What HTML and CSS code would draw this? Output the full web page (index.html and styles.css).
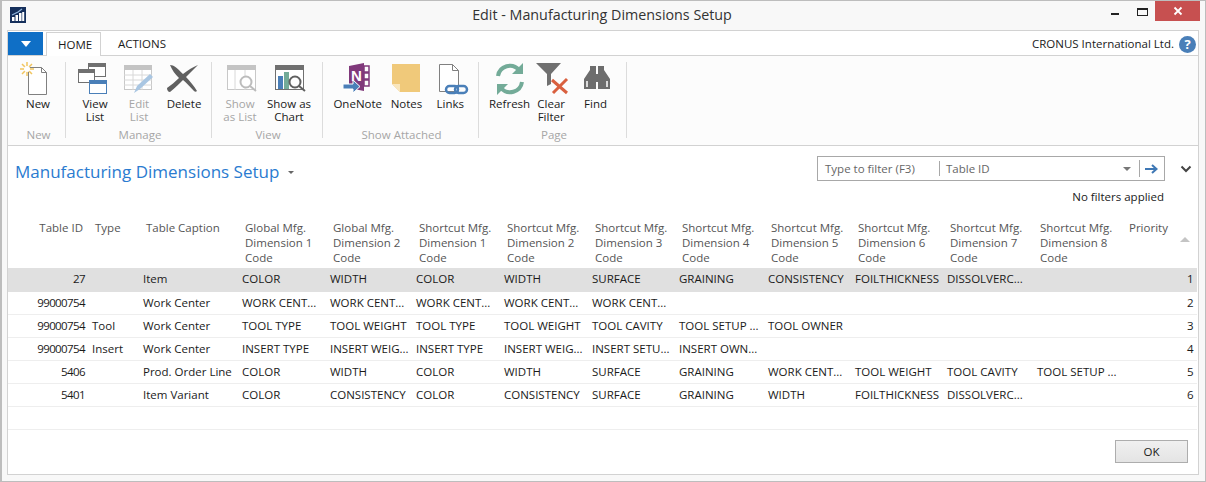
FILE: index.html
```html
<!DOCTYPE html>
<html>
    <head lang="en">
        <meta charset="UTF-8">
        <title>Edit - Manufacturing Dimensions Setup</title>
        <link rel="stylesheet" href="styles.css">
    </head>
    <body>
        <div id="window">
            <div id="titlebar">
                <svg class="logo" width="16" height="16" viewBox="0 0 16 16"><rect width="16" height="16" fill="#16305c"/><path d="M2 10h2.500v4H2zM5.500 8H8v6H5.500zM9 6h2.500v8H9zM12.200 5h2v9h-2z" fill="#fff"/><path d="M2 8l6-3 4-3" stroke="#8fb4dc" stroke-width="1.200" fill="none"/></svg>
                <div class="title">Edit - Manufacturing Dimensions Setup</div>
                <div class="winbtns">
                    <span class="min"></span>
                    <span class="max"></span>
                    <span class="close"><svg width="10" height="10" viewBox="0 0 10 10"><path d="M1.500 1.500l7 7M8.500 1.500l-7 7" stroke="#fff" stroke-width="1.800"/></svg></span>
                </div>
            </div>
            <div id="panel">
                <div id="tabs">
                    <div class="filebtn"><svg width="10" height="6" viewBox="0 0 10 6"><path d="M0 0h10L5 6z" fill="#fff"/></svg></div>
                    <div class="tab selected">HOME</div>
                    <div class="tab">ACTIONS</div>
                    <div class="company">CRONUS International Ltd.</div>
                    <div class="help">?</div>
                </div>
                <div id="ribbon">
                    <div class="group g-new">
                        <div class="btns">
                            <div class="rbtn w-new">
                                <svg class="ico" width="40" height="34" viewBox="0 0 40 34"><path d="M10.500 5.500h13l5 5v22h-18z" fill="#fff" stroke="#808080"/><path d="M23.500 5.500v5h5" fill="none" stroke="#808080"/><path d="M9 0v14M2 7h14M4 2l10 10M14 2L4 12" stroke="#f1c55e" stroke-width="1.500"/><circle cx="9" cy="7" r="3" fill="#fff"/></svg>
                                <span>New</span>
                            </div>
                        </div>
                        <div class="glabel">New</div>
                    </div>
                    <div class="group g-manage">
                        <div class="btns">
                            <div class="rbtn w-44">
                                <svg class="ico" width="40" height="34" viewBox="0 0 40 34"><rect x="13.500" y="1.500" width="17" height="13" fill="#fff" stroke="#707070"/><rect x="13" y="1" width="18" height="4" fill="#707070"/><rect x="3.500" y="7.500" width="16" height="13" fill="#fff" stroke="#707070"/><rect x="3" y="7" width="17" height="4" fill="#707070"/><rect x="14.500" y="18.500" width="17" height="13" fill="#fff" stroke="#4a7fb8"/><rect x="14" y="18" width="18" height="4" fill="#4a7fb8"/></svg>
                                <span>View<br>List</span>
                            </div>
                            <div class="rbtn w-44 off">
                                <svg class="ico" width="40" height="34" viewBox="0 0 40 34"><rect x="5.500" y="3.500" width="27" height="24" fill="#fff" stroke="#c8c8c8"/><rect x="5" y="3" width="28" height="5" fill="#c4c4c4"/><path d="M5 13h28M5 18h28M5 23h28M14 8v20M23 8v20" stroke="#d8d8d8"/><path d="M15 31l3-7L31 12l3 3-13 12z" fill="#a9c6e2"/></svg>
                                <span>Edit<br>List</span>
                            </div>
                            <div class="rbtn w-46">
                                <svg class="ico" width="40" height="34" viewBox="0 0 40 34"><path d="M6 3c4 0 7 3 13 9 5-4 10-7 15-9-4 4-8 8-12 12 4 4 8 9 11 14-1 1-2 1-3 0-4-4-7-8-11-11-4 4-8 8-13 12-2 0-3-2-3-4 4-3 8-6 12-10C11 12 8 8 6 3z" fill="#606060"/></svg>
                                <span>Delete</span>
                            </div>
                        </div>
                        <div class="glabel">Manage</div>
                    </div>
                    <div class="group g-view">
                        <div class="btns">
                            <div class="rbtn w-44 off">
                                <svg class="ico" width="40" height="34" viewBox="0 0 40 34"><rect x="7.500" y="3.500" width="28" height="24" fill="#fff" stroke="#c8c8c8"/><rect x="7" y="3" width="29" height="5" fill="#c4c4c4"/><path d="M15 8v20M25 8v20" stroke="#d8d8d8"/><circle cx="26" cy="20" r="5.500" fill="#fff" stroke="#bcbcbc" stroke-width="2"/><path d="M30 24l6 5" stroke="#bcbcbc" stroke-width="2"/></svg>
                                <span>Show<br>as List</span>
                            </div>
                            <div class="rbtn w-54">
                                <svg class="ico" width="40" height="34" viewBox="0 0 40 34"><rect x="6.500" y="3.500" width="28" height="24" fill="#fff" stroke="#707070"/><rect x="6" y="3" width="29" height="5" fill="#707070"/><rect x="9" y="14" width="5" height="13" fill="#4a7fb8"/><rect x="15" y="10" width="5" height="17" fill="#73ab98"/><circle cx="26" cy="20" r="5.500" fill="#fff" stroke="#606060" stroke-width="2"/><path d="M30 24l6 5" stroke="#606060" stroke-width="2"/></svg>
                                <span>Show as<br>Chart</span>
                            </div>
                        </div>
                        <div class="glabel">View</div>
                    </div>
                    <div class="group g-attached">
                        <div class="btns">
                            <div class="rbtn w-58">
                                <svg class="ico" width="40" height="34" viewBox="0 0 40 34"><path d="M11 4l15-3v28l-15-3z" fill="#80397b"/><path d="M26 4h5v6h-5zM26 11h5v6h-5zM26 18h5v6h-5z" fill="none" stroke="#80397b" stroke-width="1.500"/><text x="18.500" y="19" class="onenote-n">N</text><path d="M5 22h10v-4l7 6.500-7 6.500v-4H5z" fill="#4a7fb8" stroke="#fff"/></svg>
                                <span>OneNote</span>
                            </div>
                            <div class="rbtn w-40">
                                <svg class="ico" width="40" height="34" viewBox="0 0 40 34"><path d="M6 2h28v28H14L6 22z" fill="#f0c97a"/><path d="M6 22h8v8z" fill="#f9e6bd"/></svg>
                                <span>Notes</span>
                            </div>
                            <div class="rbtn w-48">
                                <svg class="ico" width="40" height="34" viewBox="0 0 40 34"><path d="M9.500 2.500h13l6 6v21h-19z" fill="#fff" stroke="#808080"/><path d="M22.500 2.500v6h6" fill="none" stroke="#808080"/><rect x="16" y="24" width="12" height="7" rx="3.500" fill="none" stroke="#4a7fb8" stroke-width="2.500"/><rect x="25" y="24" width="12" height="7" rx="3.500" fill="none" stroke="#4a7fb8" stroke-width="2.500"/></svg>
                                <span>Links</span>
                            </div>
                        </div>
                        <div class="glabel">Show Attached</div>
                    </div>
                    <div class="group g-page">
                        <div class="btns">
                            <div class="rbtn w-50">
                                <svg class="ico" width="40" height="34" viewBox="0 0 40 34"><path d="M8 14a12 12 0 0 1 21-6" fill="none" stroke="#73ab98" stroke-width="4"/><path d="M33 1v11H22z" fill="#73ab98"/><path d="M32 20a12 12 0 0 1-21 6" fill="none" stroke="#73ab98" stroke-width="4"/><path d="M7 33V22h11z" fill="#73ab98"/></svg>
                                <span>Refresh</span>
                            </div>
                            <div class="rbtn w-36">
                                <svg class="ico" width="40" height="34" viewBox="0 0 40 34"><path d="M5 1h25l-10 11v10l-4 2V12z" fill="#707070"/><path d="M21 18l15 13M36 17L22 31" stroke="#d9603f" stroke-width="3"/></svg>
                                <span>Clear<br>Filter</span>
                            </div>
                            <div class="rbtn w-find">
                                <svg class="ico" width="40" height="34" viewBox="0 0 40 34"><path d="M14 4h6v23H8V17l6-9zM22 4h6v4l6 9v10H22z" fill="#6d6d6d"/><path d="M20 12h2v8h-2z" fill="#6d6d6d"/><path d="M11 19v6M31 19v6" stroke="#fff" stroke-width="1.500"/></svg>
                                <span>Find</span>
                            </div>
                        </div>
                        <div class="glabel">Page</div>
                    </div>
                </div>
                <div id="pagehead">
                    <div class="pagetitle">Manufacturing Dimensions Setup<i class="caret"></i></div>
                    <div class="filterwrap">
                        <div class="filterline">
                            <div class="filter">
                                <div class="f-type">Type to filter (F3)</div>
                                <div class="f-field">Table ID<i class="caret2"></i></div>
                                <div class="f-go"><svg width="14" height="10" viewBox="0 0 14 10"><path d="M0 5h11M7 1l4.500 4L7 9" fill="none" stroke="#3f78b5" stroke-width="2"/></svg></div>
                            </div>
                            <svg class="chev" width="12" height="8" viewBox="0 0 12 8"><path d="M1.500 1.500L6 6l4.500-4.500" fill="none" stroke="#444" stroke-width="2"/></svg>
                        </div>
                        <div class="nofilter">No filters applied</div>
                    </div>
                </div>
                <table id="list">
                    <colgroup>
                        <col class="c1"><col class="c2"><col class="c3"><col class="c4"><col class="c5"><col class="c6"><col class="c7">
                        <col class="c8"><col class="c9"><col class="c10"><col class="c11"><col class="c12"><col class="c13"><col class="c14">
                    </colgroup>
                    <thead>
                        <tr>
                            <th class="num">Table ID</th><th>Type</th><th>Table Caption</th>
                            <th>Global Mfg. Dimension 1 Code</th><th>Global Mfg. Dimension 2 Code</th>
                            <th>Shortcut Mfg. Dimension 1 Code</th><th>Shortcut Mfg. Dimension 2 Code</th>
                            <th>Shortcut Mfg. Dimension 3 Code</th><th>Shortcut Mfg. Dimension 4 Code</th>
                            <th>Shortcut Mfg. Dimension 5 Code</th><th>Shortcut Mfg. Dimension 6 Code</th>
                            <th>Shortcut Mfg. Dimension 7 Code</th><th>Shortcut Mfg. Dimension 8 Code</th>
                            <th class="prio">Priority<i class="sort"></i></th>
                        </tr>
                    </thead>
                    <tbody>
                        <tr class="selected">
                            <td class="num">27</td><td></td><td>Item</td><td>COLOR</td><td>WIDTH</td><td>COLOR</td><td>WIDTH</td><td>SURFACE</td><td>GRAINING</td><td>CONSISTENCY</td><td>FOILTHICKNESS</td><td>DISSOLVERC...</td><td></td><td class="num">1</td>
                        </tr>
                        <tr>
                            <td class="num">99000754</td><td></td><td>Work Center</td><td>WORK CENT...</td><td>WORK CENT...</td><td>WORK CENT...</td><td>WORK CENT...</td><td>WORK CENT...</td><td></td><td></td><td></td><td></td><td></td><td class="num">2</td>
                        </tr>
                        <tr>
                            <td class="num">99000754</td><td>Tool</td><td>Work Center</td><td>TOOL TYPE</td><td>TOOL WEIGHT</td><td>TOOL TYPE</td><td>TOOL WEIGHT</td><td>TOOL CAVITY</td><td>TOOL SETUP ...</td><td>TOOL OWNER</td><td></td><td></td><td></td><td class="num">3</td>
                        </tr>
                        <tr>
                            <td class="num">99000754</td><td>Insert</td><td>Work Center</td><td>INSERT TYPE</td><td>INSERT WEIG...</td><td>INSERT TYPE</td><td>INSERT WEIG...</td><td>INSERT SETU...</td><td>INSERT OWN...</td><td></td><td></td><td></td><td></td><td class="num">4</td>
                        </tr>
                        <tr>
                            <td class="num">5406</td><td></td><td>Prod. Order Line</td><td>COLOR</td><td>WIDTH</td><td>COLOR</td><td>WIDTH</td><td>SURFACE</td><td>GRAINING</td><td>WORK CENT...</td><td>TOOL WEIGHT</td><td>TOOL CAVITY</td><td>TOOL SETUP ...</td><td class="num">5</td>
                        </tr>
                        <tr>
                            <td class="num">5401</td><td></td><td>Item Variant</td><td>COLOR</td><td>CONSISTENCY</td><td>COLOR</td><td>CONSISTENCY</td><td>SURFACE</td><td>GRAINING</td><td>WIDTH</td><td>FOILTHICKNESS</td><td>DISSOLVERC...</td><td></td><td class="num">6</td>
                        </tr>
                        <tr class="empty">
                            <td></td><td></td><td></td><td></td><td></td><td></td><td></td><td></td><td></td><td></td><td></td><td></td><td></td><td></td>
                        </tr>
                    </tbody>
                </table>
                <div id="footer">
                    <div class="okbtn">OK</div>
                </div>
            </div>
        </div>
    </body>
</html>
```

FILE: styles.css
```css
*{
    margin:0;
    padding:0;
    box-sizing:border-box;
}
body{
    font-family:"Open Sans","Noto Sans","Liberation Sans",sans-serif;
    font-size:11.5px;
    color:#1a1a1a;
    background:#fff;
}
#window{
    width:1206px;
    height:482px;
    background:#f8f8f8;
    border:1px solid #bdbdbd;
    border-left-width:2px;
    display:flex;
    flex-direction:column;
    overflow:hidden;
}
#titlebar{
    height:29px;
    flex:none;
    display:flex;
    align-items:flex-start;
    padding-left:8px;
}
.logo{
    margin-top:6px;
    flex:none;
}
.title{
    flex:1;
    text-align:center;
    font-size:14.3px;
    line-height:28px;
    color:#333;
    padding-left:67px;
}
.winbtns{
    display:flex;
    align-items:flex-start;
    margin-right:5px;
}
.min{
    width:8px;
    height:2px;
    background:#222;
    margin:12px 18px 0 0;
}
.max{
    width:11px;
    height:8px;
    border:1px solid #222;
    border-top-width:2px;
    margin:7px 7px 0 0;
}
.close{
    width:45px;
    height:20px;
    background:#c75050;
    display:flex;
    align-items:center;
    justify-content:center;
}
#panel{
    flex:1;
    margin:0 6px 6px 5px;
    background:#fff;
    border:1px solid #d2d2d2;
    display:flex;
    flex-direction:column;
}
#tabs{
    height:25px;
    flex:none;
    display:flex;
    align-items:flex-end;
    border-bottom:1px solid #d2d2d2;
    padding-top:1px;
}
.filebtn{
    width:35px;
    height:23px;
    background:#0f6fc6;
    display:flex;
    align-items:center;
    justify-content:center;
    margin-right:3px;
    align-self:flex-start;
}
.tab{
    height:24px;
    line-height:24px;
    padding:0 11px;
    margin-bottom:-1px;
    font-size:11.5px;
}
.tab.selected{
    width:55px;
    background:#fff;
    border:1px solid #d2d2d2;
    border-bottom:0;
    margin-right:6px;
}
.company{
    margin-left:auto;
    align-self:center;
    font-size:11.5px;
    margin-right:5px;
}
.help{
    width:17px;
    height:17px;
    border-radius:50%;
    background:#4a7fb8;
    color:#fff;
    font-weight:bold;
    font-size:13px;
    line-height:17px;
    text-align:center;
    align-self:center;
    margin:1px 2px 0 0;
}
#ribbon{
    height:90px;
    flex:none;
    display:flex;
    background:#fcfcfc;
    border-bottom:1px solid #d2d2d2;
    padding-top:6px;
}
.group{
    display:flex;
    flex-direction:column;
    border-right:1px solid #dcdcdc;
    height:76px;
    padding:0 4px 0 6px;
}
.g-new{
    width:58px;
    padding-left:8px;
}
.g-manage{
    width:146px;
    padding-left:7px;
}
.g-view{
    width:111px;
}
.g-attached{
    width:156px;
}
.g-page{
    width:148px;
    padding-left:7px;
}
.btns{
    display:flex;
    flex:1;
    min-height:0;
}
.glabel{
    text-align:center;
    color:#a6a6a6;
    line-height:14px;
    height:14px;
    margin-bottom:-4px;
    flex:none;
}
.rbtn{
    display:flex;
    flex-direction:column;
    align-items:center;
    text-align:center;
    line-height:13px;
}
.rbtn span{
    margin-top:1px;
}
.rbtn.off{
    color:#a6a6a6;
}
.ico{
    display:block;
    flex:none;
}
.onenote-n{
    font-family:"Liberation Sans",sans-serif;
    font-weight:bold;
    font-size:15px;
    fill:#fff;
    text-anchor:middle;
}
.w-new{width:44px;}
.w-36{width:36px;}
.w-40{width:40px;}
.w-44{width:44px;}
.w-46{width:46px;}
.w-48{width:48px;}
.w-50{width:50px;}
.w-54{width:54px;}
.w-58{width:58px;}
.w-find{width:56px;}
#pagehead{
    height:74px;
    flex:none;
    display:flex;
    justify-content:space-between;
    padding:10px 6px 0 7px;
}
.pagetitle{
    font-size:17px;
    line-height:32px;
    color:#2a7bd0;
}
.caret{
    display:inline-block;
    width:0;
    height:0;
    border:3px solid transparent;
    border-top:3px solid #666;
    border-bottom:0;
    margin-left:9px;
    vertical-align:4px;
}
.filterwrap{
    display:flex;
    flex-direction:column;
}
.filterline{
    display:flex;
    align-items:center;
}
.filter{
    width:348px;
    height:25px;
    border:1px solid #a8a8a8;
    background:#fff;
    display:flex;
    align-items:center;
    color:#666;
}
.f-type{
    width:122px;
    padding-left:7px;
    height:15px;
    line-height:15px;
    border-right:1px solid #a8a8a8;
    flex:none;
}
.f-field{
    flex:1;
    height:17px;
    line-height:17px;
    padding-left:6px;
    border-right:1px solid #a8a8a8;
    position:relative;
}
.caret2{
    position:absolute;
    right:8px;
    top:7px;
    width:0;
    height:0;
    border:4px solid transparent;
    border-top:4px solid #777;
    border-bottom:0;
}
.f-go{
    width:24px;
    flex:none;
    display:flex;
    align-items:center;
    justify-content:center;
}
.chev{
    margin:0 0 0 15px;
    flex:none;
}
.nofilter{
    text-align:right;
    margin:8px 28px 0 0;
    line-height:15px;
}
#list{
    width:1189px;
    table-layout:fixed;
    border-collapse:collapse;
    flex:none;
}
.c1{width:81px;}
.c2{width:51px;}
.c3{width:99px;}
.c4{width:88px;}
.c5{width:86px;}
.c6{width:88px;}
.c7{width:88px;}
.c8{width:87px;}
.c9{width:89px;}
.c10{width:87px;}
.c11{width:92px;}
.c12{width:90px;}
.c13{width:89px;}
.c14{width:74px;}
#list th{
    font-weight:normal;
    text-align:left;
    vertical-align:top;
    color:#555;
    line-height:15px;
    padding:0 6px;
    height:48px;
    white-space:normal;
}
#list th.num{
    text-align:right;
    padding-right:6px;
    padding-left:0;
}
#list th.prio{
    position:relative;
}
.sort{
    position:absolute;
    right:7px;
    top:17px;
    width:0;
    height:0;
    border:5px solid transparent;
    border-bottom:5px solid #c4c4c4;
    border-top:0;
}
#list td{
    height:23px;
    padding:0 3px;
    white-space:nowrap;
    overflow:hidden;
    border-bottom:1px solid #eeeeee;
    line-height:22px;
}
#list td.num{
    text-align:right;
    padding-right:4px;
    letter-spacing:-.6px;
}
#list tr.selected td{
    background:#e0e0e0;
    border-bottom-color:#e0e0e0;
}
#footer{
    flex:1;
    display:flex;
    justify-content:flex-end;
    align-items:flex-start;
    padding:10px 10px 0 0;
}
.okbtn{
    width:73px;
    height:23px;
    border:1px solid #adadad;
    background:linear-gradient(#f0f0f0,#e4e4e4);
    text-align:center;
    line-height:21px;
}
```
